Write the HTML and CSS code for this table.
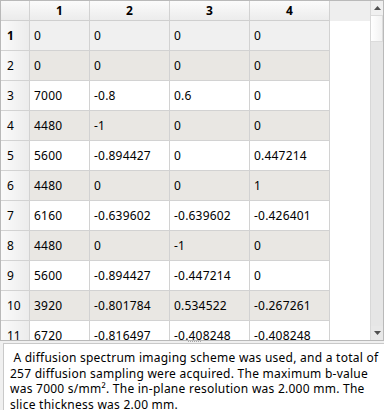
FILE: index.html
```html
<!DOCTYPE html>
<html>
<head>
<meta charset="utf-8">
<link rel="stylesheet" href="styles.css">
</head>
<body>
<div class="app">
  <div class="view">
    <div class="grid">
      <div class="row head">
        <div class="corner"></div>
        <div class="ch">1</div><div class="ch">2</div><div class="ch">3</div><div class="ch">4</div>
        <div class="ch-fill"></div>
      </div>
      <div class="row cur"><div class="rh bold">1</div><div class="c">0</div><div class="c">0</div><div class="c">0</div><div class="c">0</div></div>
      <div class="row alt"><div class="rh">2</div><div class="c">0</div><div class="c">0</div><div class="c">0</div><div class="c">0</div></div>
      <div class="row"><div class="rh">3</div><div class="c">7000</div><div class="c">-0.8</div><div class="c">0.6</div><div class="c">0</div></div>
      <div class="row alt"><div class="rh">4</div><div class="c">4480</div><div class="c">-1</div><div class="c">0</div><div class="c">0</div></div>
      <div class="row"><div class="rh">5</div><div class="c">5600</div><div class="c">-0.894427</div><div class="c">0</div><div class="c">0.447214</div></div>
      <div class="row alt"><div class="rh">6</div><div class="c">4480</div><div class="c">0</div><div class="c">0</div><div class="c">1</div></div>
      <div class="row"><div class="rh">7</div><div class="c">6160</div><div class="c">-0.639602</div><div class="c">-0.639602</div><div class="c">-0.426401</div></div>
      <div class="row alt"><div class="rh">8</div><div class="c">4480</div><div class="c">0</div><div class="c">-1</div><div class="c">0</div></div>
      <div class="row"><div class="rh">9</div><div class="c">5600</div><div class="c">-0.894427</div><div class="c">-0.447214</div><div class="c">0</div></div>
      <div class="row alt"><div class="rh">10</div><div class="c">3920</div><div class="c">-0.801784</div><div class="c">0.534522</div><div class="c">-0.267261</div></div>
      <div class="row"><div class="rh">11</div><div class="c">6720</div><div class="c">-0.816497</div><div class="c">-0.408248</div><div class="c">-0.408248</div></div>
    </div>
    <div class="scrollbar">
      <div class="arrow up"><svg width="7" height="4" viewBox="0 0 7 4"><polygon points="0,4 7,4 3.5,0" fill="#505050"/></svg></div>
      <div class="thumb"></div>
      <div class="track"></div>
      <div class="arrow down"><svg width="7" height="4" viewBox="0 0 7 4"><polygon points="0,0 7,0 3.5,4" fill="#505050"/></svg></div>
    </div>
  </div>
  <div class="splitter"><span class="dots"></span></div>
  <div class="notes"> A diffusion spectrum imaging scheme was used, and a total of 257 diffusion sampling were acquired. The maximum b-value was 7000 s/mm². The in-plane resolution was 2.000 mm. The slice thickness was 2.00 mm.</div>
</div>
</body>
</html>
```
FILE: styles.css
```css
html, body {
  margin: 0;
  padding: 0;
  background: #f0f0f0;
}
.app {
  width: 384px;
  height: 410px;
  display: flex;
  flex-direction: column;
  font-family: "Noto Sans", "Open Sans", sans-serif;
  font-size: 12px;
  color: #000;
  overflow: hidden;
}
.view {
  height: 341px;
  box-sizing: border-box;
  border: 1px solid #b9b9b9;
  display: flex;
  background: #fff;
  flex-shrink: 0;
}
.grid {
  flex: 1;
  overflow: hidden;
  background: #fff;
}
.row {
  display: grid;
  grid-template-columns: 29px 60px 80px 80px 80px;
  width: 329px;
  height: 30px;
  background: #fff;
}
.row > div {
  box-sizing: border-box;
  border-right: 1px solid #d2d2d2;
  border-bottom: 1px solid #d2d2d2;
  display: flex;
  align-items: center;
  white-space: nowrap;
  overflow: hidden;
}
.row.alt { background: #e9e7e3; }
.row.cur { background: #f0f0f0; }
.row.head {
  grid-template-columns: 29px 60px 80px 80px 80px 1fr;
  width: auto;
  height: 20px;
  background: #eeeeee;
}
.row.head > div {
  border-bottom: 1px solid #cfcfcf;
}
.corner {
  background: linear-gradient(#f9f9f9, #ebebeb);
}
.ch {
  justify-content: center;
  font-weight: bold;
  background: linear-gradient(#fbfbfb, #ececec);
}
.row.head > .ch-fill {
  border-right: none;
  border-bottom: none;
  background: #eeeeee;
}
.rh {
  padding-left: 6px;
  background: linear-gradient(to right, #fafafa, #ececec);
}
.rh.bold { font-weight: bold; }
.c { padding-left: 4px; letter-spacing: 0.2px; }
.scrollbar {
  width: 12px;
  border-left: 1px solid #d8d8d8;
  display: flex;
  flex-direction: column;
  background: #e8e8e8;
}
.arrow {
  height: 14px;
  display: flex;
  align-items: center;
  justify-content: center;
  background: #f0f0f0;
  flex-shrink: 0;
}
.thumb {
  height: 27px;
  box-sizing: border-box;
  border: 1px solid #dcdcdc;
  border-left: none;
  background: linear-gradient(to right, #ffffff, #f2f2f2);
  flex-shrink: 0;
}
.track {
  flex: 1;
  background: #e6e6e6;
}
.arrow.down { background: #e8e8e8; }
.splitter {
  height: 2px;
  position: relative;
  flex-shrink: 0;
}
.dots {
  position: absolute;
  left: 188px;
  top: 0;
  width: 13px;
  height: 1px;
  background: repeating-linear-gradient(to right, #a8a8a8 0 1px, transparent 1px 2px);
}
.notes {
  flex: 1;
  margin-left: 3px;
  box-sizing: border-box;
  border: 1px solid #c9c9c9;
  border-right: none;
  border-bottom: none;
  background: #fff;
  padding: 6px 4px 0 6px;
  line-height: 15.5px;
  letter-spacing: 0.25px;
  white-space: pre-wrap;
}
```
